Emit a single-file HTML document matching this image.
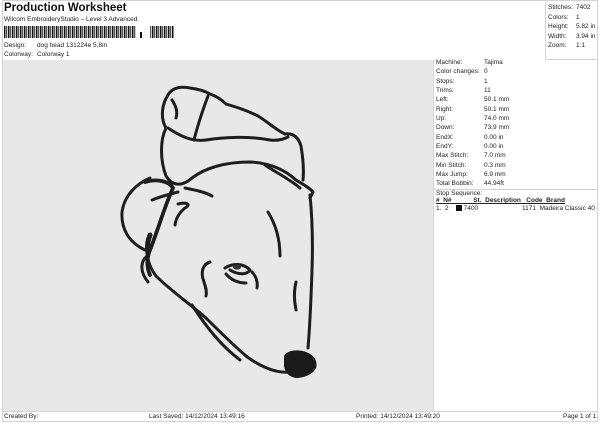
<!DOCTYPE html>
<html><head><meta charset="utf-8"><style>
*{margin:0;padding:0;box-sizing:border-box}
body{width:600px;height:424px;background:#fff;font-family:"Liberation Sans",Arial,sans-serif;color:#222;position:relative;overflow:hidden;font-size:6.5px}
.a{position:absolute;white-space:nowrap}
</style></head><body>
<div class="a" style="left:2px;top:0;width:596px;height:422px;border:1px solid #d4d4d4"></div>
<div class="a" style="left:4px;top:2px;font-size:11.5px;font-weight:bold;color:#111">Production Worksheet</div>
<div class="a" style="left:4px;top:16px">Wilcom EmbroideryStudio – Level 3 Advanced</div>
<svg class="a" style="left:4px;top:26px" width="170" height="14">
<defs><pattern id="bp" width="4" height="12" patternUnits="userSpaceOnUse"><rect x="0" width="1.5" height="12" fill="#111"/><rect x="2.3" width="0.9" height="12" fill="#111"/></pattern></defs>
<rect x="0" y="0" width="132" height="12" fill="url(#bp)"/>
<rect x="136" y="6" width="2" height="6" fill="#111"/>
<rect x="146" y="0" width="26" height="12" fill="url(#bp)"/>
</svg>
<div class="a" style="left:4px;top:42px">Design:</div><div class="a" style="left:37px;top:42px">dog head 131224e 5,8in</div>
<div class="a" style="left:4px;top:51px">Colorway:</div><div class="a" style="left:37px;top:51px">Colorway 1</div>
<div class="a" style="left:545px;top:0;width:53px;height:60px;border-left:1px solid #d4d4d4;border-bottom:1px solid #d4d4d4"></div>
<div class="a" style="left:548px;top:3px;line-height:9.6px">Stitches:<br>Colors:<br>Height:<br>Width:<br>Zoom:</div>
<div class="a" style="left:576px;top:3px;line-height:9.6px">7402<br>1<br>5.82 in<br>3.94 in<br>1:1</div>
<div class="a" style="left:3px;top:60px;width:430px;height:351px;background:#e8e8e8"></div>
<div class="a" style="left:433px;top:60px;width:165px;height:351px;border-left:1px solid #d4d4d4"></div>
<div class="a" style="left:436px;top:58px;line-height:9.35px">Machine:<br>Color changes:<br>Stops:<br>Trims:<br>Left:<br>Right:<br>Up:<br>Down:<br>EndX:<br>EndY:<br>Max Stitch:<br>Min Stitch:<br>Max Jump:<br>Total Bobbin:</div>
<div class="a" style="left:484px;top:58px;line-height:9.35px">Tajima<br>0<br>1<br>11<br>50.1 mm<br>50.1 mm<br>74.0 mm<br>73.9 mm<br>0.00 in<br>0.00 in<br>7.0 mm<br>0.3 mm<br>6.9 mm<br>44.94ft</div>
<div class="a" style="left:433px;top:189px;width:165px;border-top:1px solid #d4d4d4"></div>
<div class="a" style="left:436px;top:190px">Stop Sequence:</div>
<div class="a" style="left:436px;top:197px;font-weight:bold;text-decoration:underline">#&nbsp; N#&nbsp;&nbsp;&nbsp;&nbsp;&nbsp;&nbsp;&nbsp;&nbsp;&nbsp;&nbsp;&nbsp; St.&nbsp; Description&nbsp;&nbsp; Code&nbsp; Brand</div>
<div class="a" style="left:436px;top:205px">1.&nbsp; 2&nbsp;&nbsp;&nbsp; <span style="display:inline-block;width:6px;height:6px;background:#111;vertical-align:-1px"></span> 7400</div>
<div class="a" style="left:522px;top:205px">1171&nbsp; Madeira Classic 40</div>
<div class="a" style="left:3px;top:411px;width:595px;border-top:1px solid #d4d4d4"></div>
<div class="a" style="left:4px;top:413px">Created By:</div>
<div class="a" style="left:149px;top:413px">Last Saved: 14/12/2024 13:49:16</div>
<div class="a" style="left:356px;top:413px">Printed: 14/12/2024 13:49:20</div>
<div class="a" style="left:563px;top:413px">Page 1 of 1</div>
<svg class="a" style="left:0;top:0" width="600" height="424" fill="none" stroke="#1e1e1e" stroke-width="3" stroke-linecap="round" stroke-linejoin="round">
<path d="M166,128 C160,118 162,104 168,95 C172,88 180,86 190,88 C198,89 205,91 210,94 C216,96 222,100 226,104 C236,107 246,110 258,116 C268,122 276,130 285,134 C292,133 298,136 301,146 C303,158 304,170 303,180"/>
<path d="M166,128 C160,140 160,160 166,176 C172,186 182,187 192,178 C205,168 225,162 250,162 C270,163 285,170 296,180 C304,185 310,188 313,192 L310,198"/>
<path d="M168,128 C180,136 192,142 206,140 C225,137 250,136 270,140 C278,141 284,139 288,137"/>
<path d="M208,96 C202,112 197,128 194,140"/>
<path d="M172,100 C176,106 178,112 176,118"/>
<path d="M265,165 C275,172 288,178 300,188"/>
<path d="M310,195 C312,215 313,240 312,270 C311,300 310,325 308,348"/>
<path d="M291,372 C275,374 258,365 246,356 C230,342 218,330 206,318 C190,304 170,290 156,276 C147,264 145,250 148,238"/>
<path d="M192,305 C205,325 220,345 240,360"/>
<path d="M150,178 C136,184 124,196 122,212 C121,228 128,242 145,250"/>
<path d="M145,182 C158,178 170,182 173,188 C165,205 158,230 150,250 C146,260 147,268 150,275" stroke-width="3.8"/>
<path d="M152,200 C162,196 170,194 178,192"/>
<path d="M178,204 C186,202 192,204 185,208 C180,212 176,218 175,225"/>
<path d="M185,188 C195,190 205,192 212,196"/>
<path d="M268,212 C276,225 280,240 280,256"/>
<path d="M296,282 C294,290 294,300 296,310"/>
<path d="M210,262 C203,264 200,272 204,282 C206,288 207,292 206,296"/>
<path d="M225,268 C232,263 244,263 250,270 C247,275 238,275 230,270"/>
<path d="M226,274 C232,281 240,283 246,283"/>
<path d="M252,272 C256,276 258,282 257,288"/>
<path d="M147,256 C140,262 140,272 148,282"/>
<path d="M150,235 C148,240 147,246 148,250" stroke-width="5"/>
</svg>
<svg class="a" style="left:0;top:0" width="600" height="424">
<ellipse cx="237" cy="267" rx="4" ry="2.6" fill="#333"/>
<path d="M284,356 C287,350 298,349 306,352 C314,355 318,361 316,368 C313,374 306,377 298,378 C290,378 285,373 284,366 Z" fill="#1a1a1a"/>
</svg>
</body></html>
